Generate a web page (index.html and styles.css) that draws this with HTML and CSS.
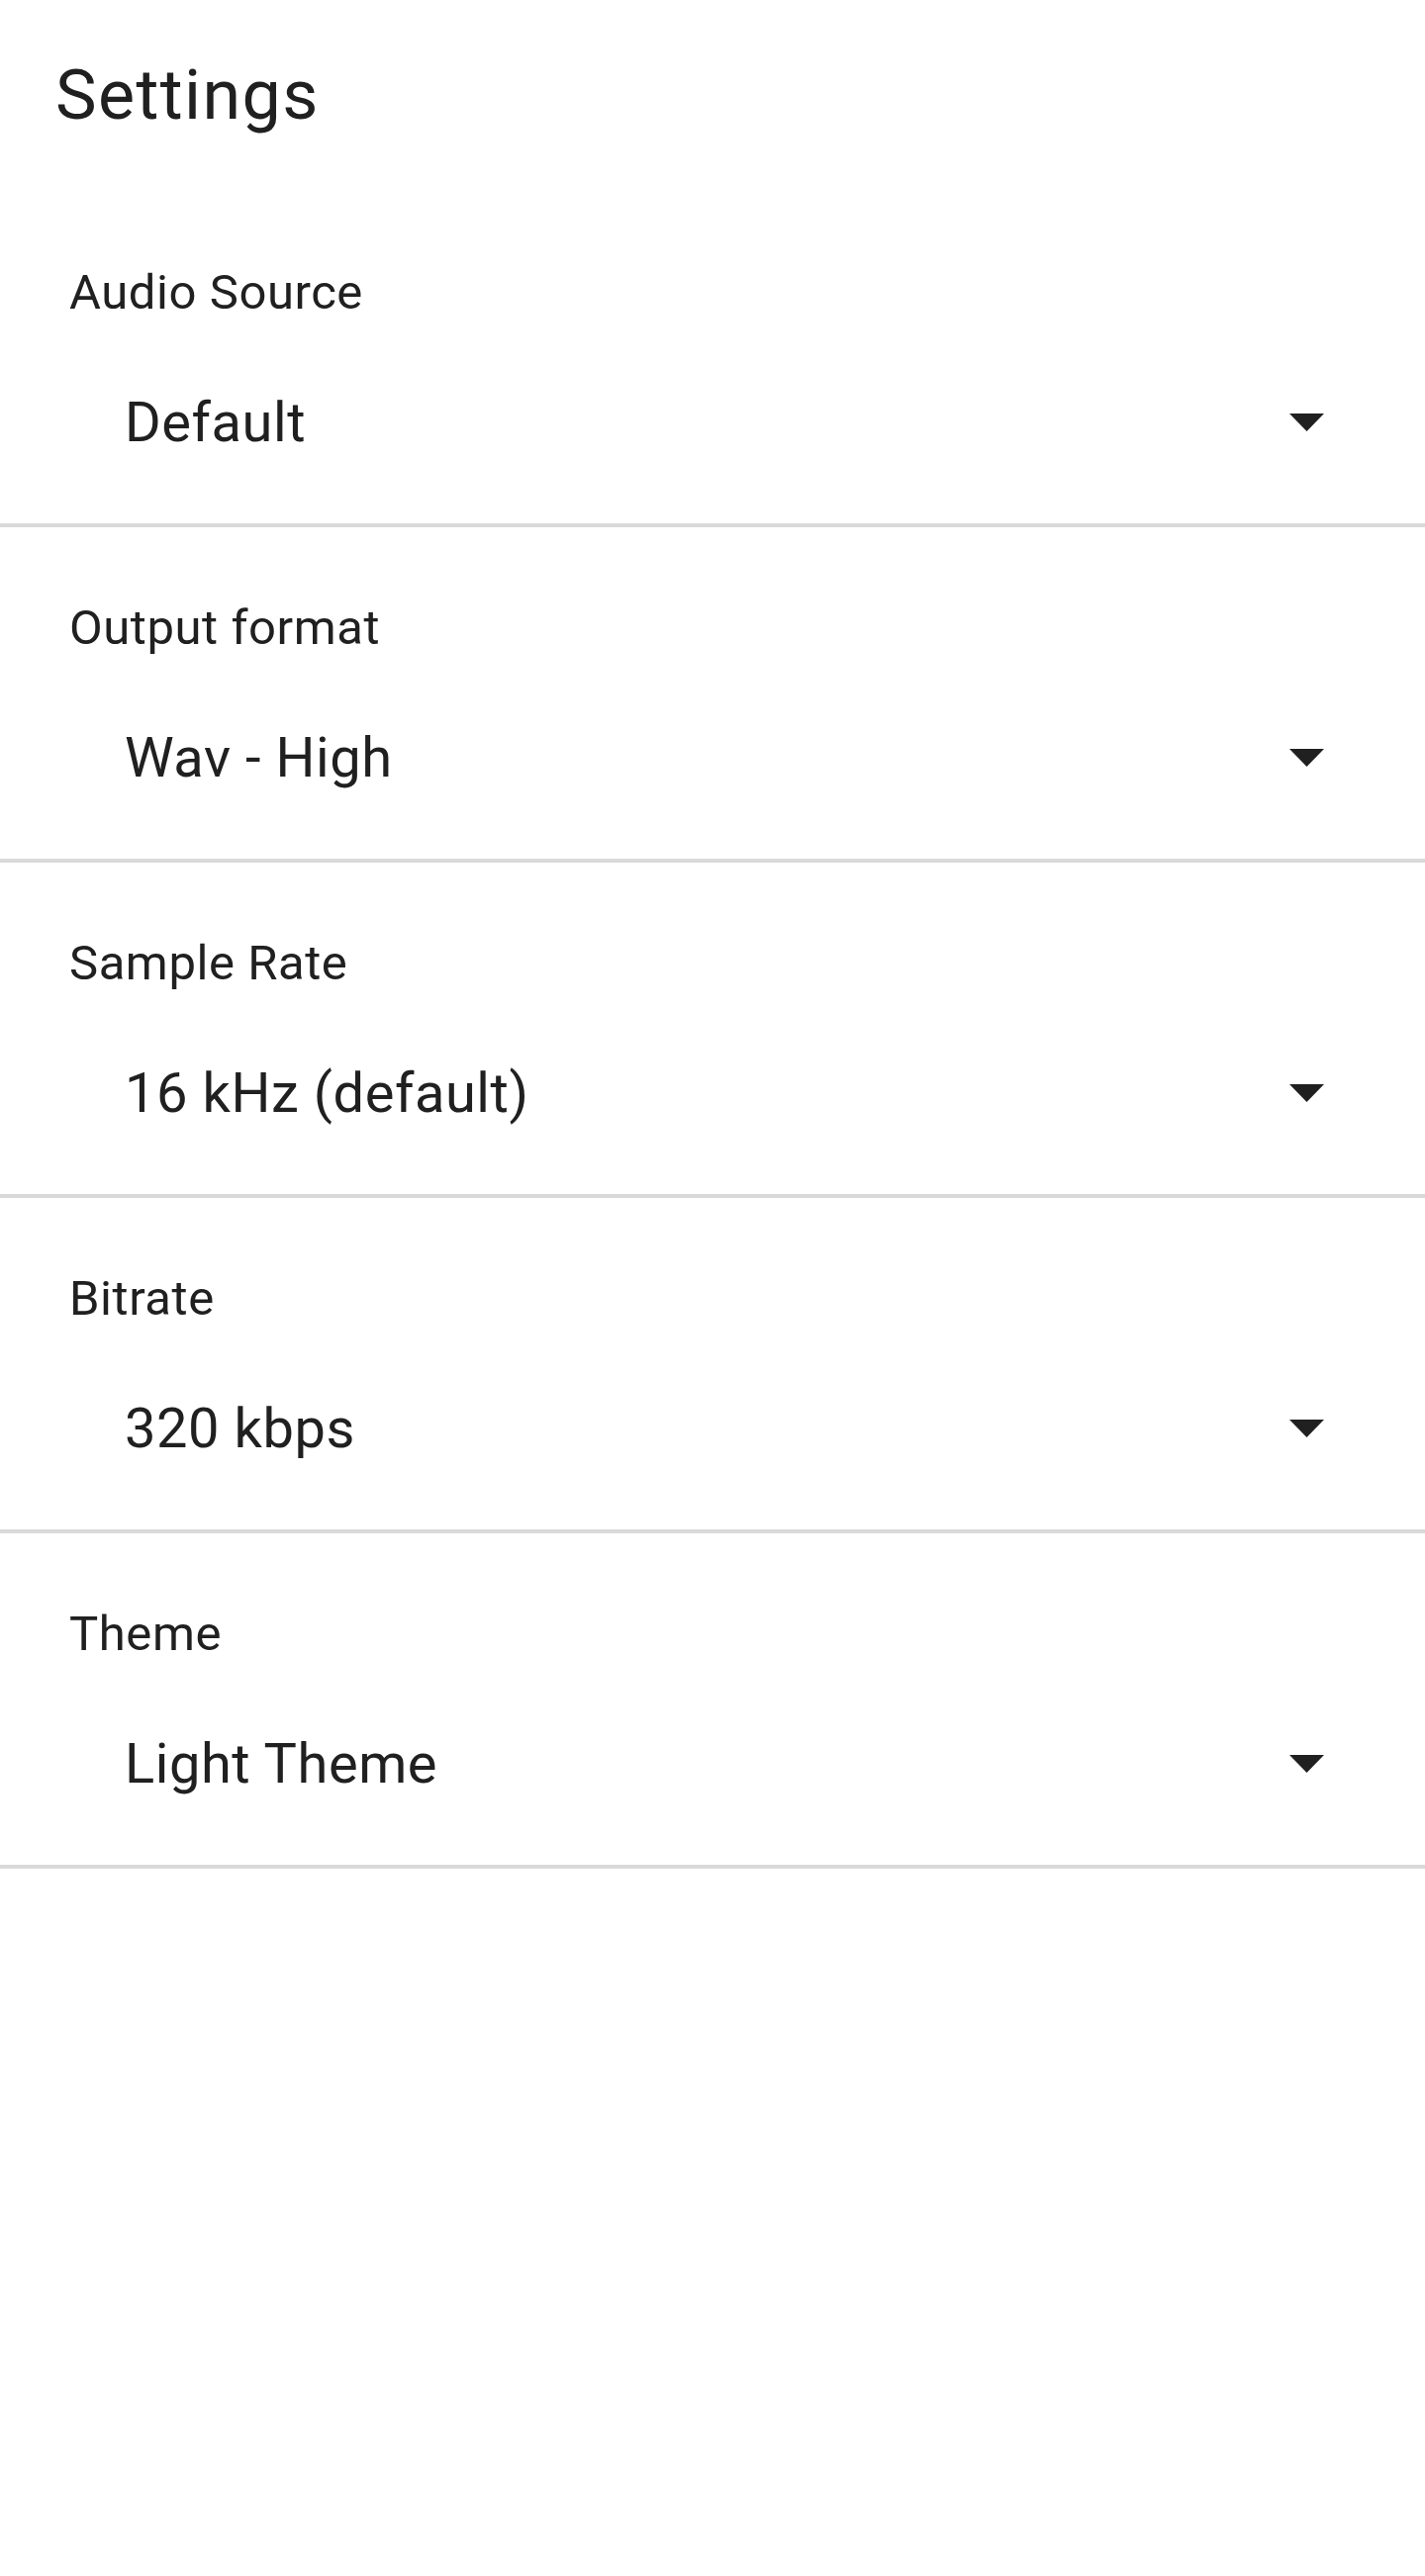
FILE: index.html
```html
<!DOCTYPE html>
<html lang="en">
<head>
    <meta charset="UTF-8">
    <meta name="viewport" content="width=device-width, initial-scale=1.0">
    <title>Settings</title>
    <link rel="stylesheet" href="styles.css">
</head>
<body>
    <div class="screen">
        <h1 class="title">Settings</h1>

        <div class="setting">
            <div class="setting-label">Audio Source</div>
            <div class="spinner">
                <span class="spinner-value">Default</span>
                <svg class="spinner-arrow" viewBox="0 0 35 18"><path d="M0 0h35L17.5 18z"/></svg>
            </div>
        </div>

        <div class="setting">
            <div class="setting-label">Output format</div>
            <div class="spinner">
                <span class="spinner-value">Wav - High</span>
                <svg class="spinner-arrow" viewBox="0 0 35 18"><path d="M0 0h35L17.5 18z"/></svg>
            </div>
        </div>

        <div class="setting">
            <div class="setting-label">Sample Rate</div>
            <div class="spinner">
                <span class="spinner-value">16 kHz (default)</span>
                <svg class="spinner-arrow" viewBox="0 0 35 18"><path d="M0 0h35L17.5 18z"/></svg>
            </div>
        </div>

        <div class="setting">
            <div class="setting-label">Bitrate</div>
            <div class="spinner">
                <span class="spinner-value">320 kbps</span>
                <svg class="spinner-arrow" viewBox="0 0 35 18"><path d="M0 0h35L17.5 18z"/></svg>
            </div>
        </div>

        <div class="setting">
            <div class="setting-label">Theme</div>
            <div class="spinner">
                <span class="spinner-value">Light Theme</span>
                <svg class="spinner-arrow" viewBox="0 0 35 18"><path d="M0 0h35L17.5 18z"/></svg>
            </div>
        </div>
    </div>
</body>
</html>
```
FILE: styles.css
```css
* {
    margin: 0;
    padding: 0;
    box-sizing: border-box;
}

body {
    background: #fff;
    color: #202020;
    font-family: Roboto, 'Liberation Sans', sans-serif;
    letter-spacing: 0.035em;
    min-height: 100vh;
}

.screen {
    display: flex;
    flex-direction: column;
}

.title {
    font-size: 70px;
    font-weight: 400;
    line-height: 84px;
    letter-spacing: 0.02em;
    padding: 54px 56px 56px;
}

/* one row per preference, divider underneath */
.setting {
    display: flex;
    flex-direction: column;
    gap: 69px;
    padding: 73px 70px 69px;
    border-bottom: 4px solid #d9d9d9;
}

.setting-label {
    font-size: 49px;
    line-height: 58px;
}

.spinner {
    display: flex;
    align-items: center;
    justify-content: space-between;
    padding-left: 56px;
}

.spinner-value {
    font-size: 56px;
    line-height: 66px;
}

.spinner-arrow {
    width: 35px;
    height: 18px;
    margin-right: 32px;
    fill: #202020;
}
```
